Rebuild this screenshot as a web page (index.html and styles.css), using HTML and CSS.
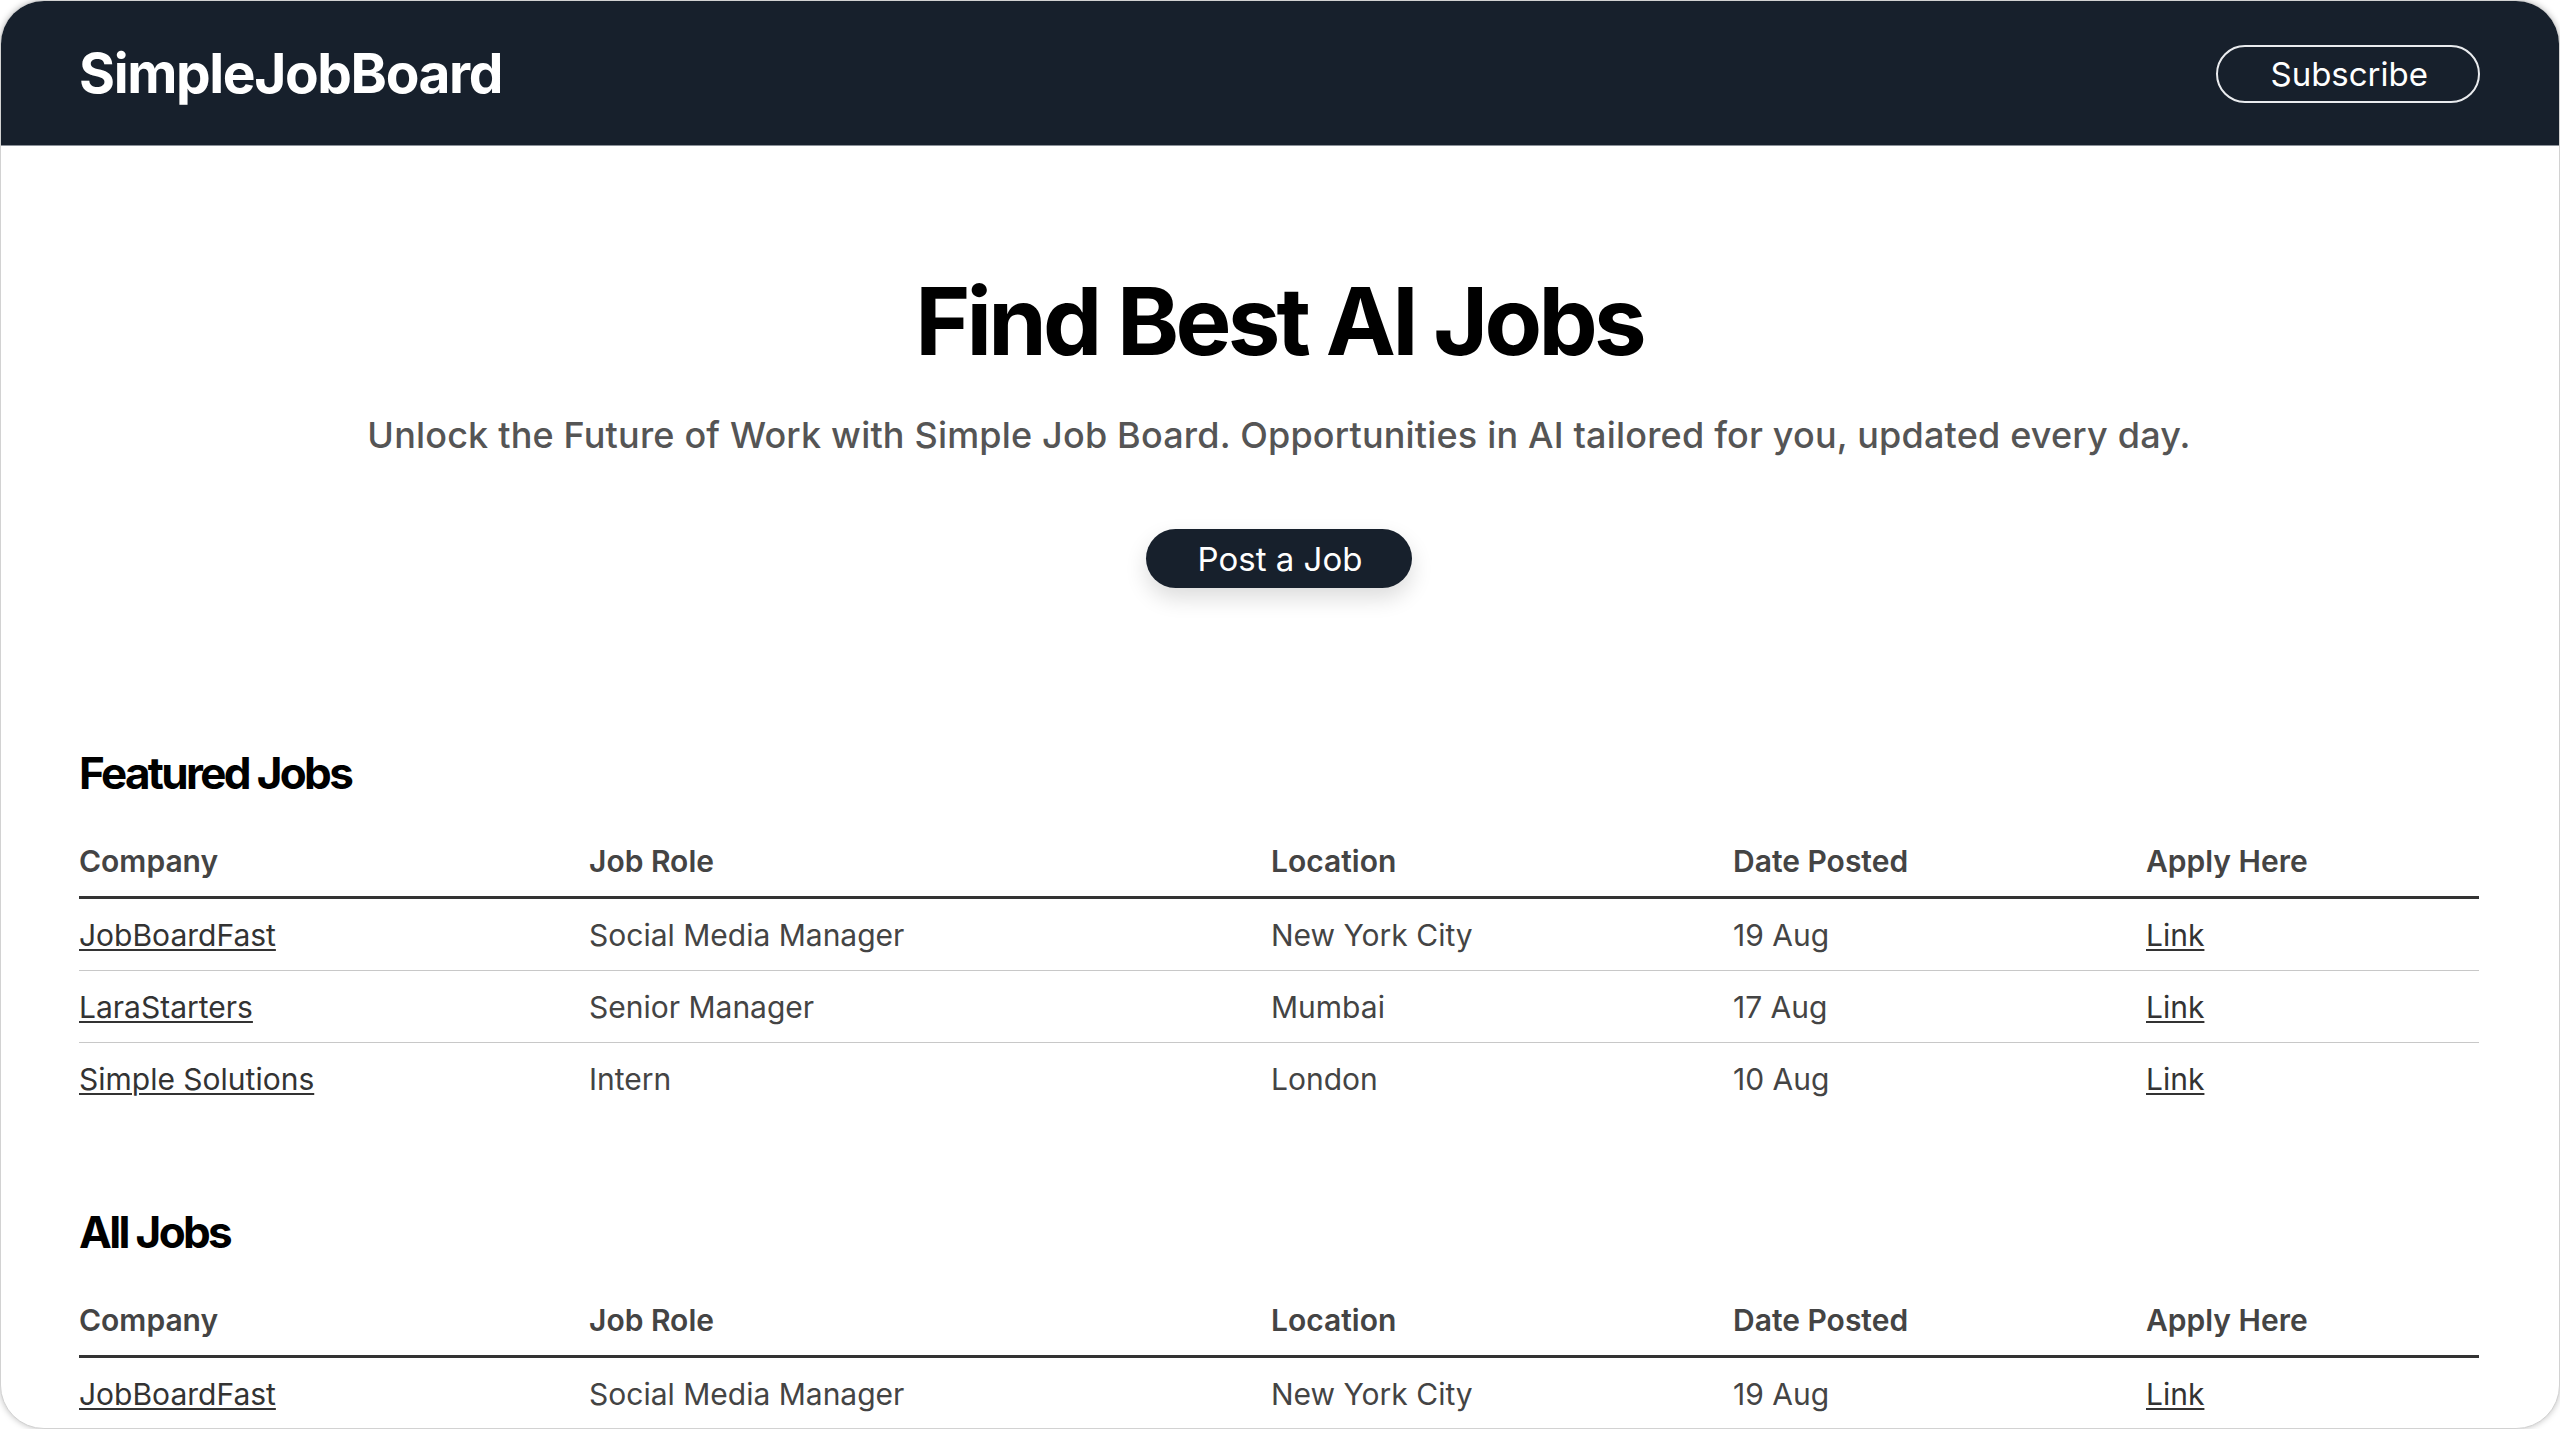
FILE: index.html
```html
<!DOCTYPE html>
<html lang="en">
<head>
<meta charset="utf-8">
<title>SimpleJobBoard</title>
<link rel="stylesheet" href="styles.css">
</head>
<body>
<div class="frame">
  <header class="topbar">
    <div class="logo">SimpleJobBoard</div>
    <a class="btn-outline" href="#">Subscribe</a>
  </header>
  <main class="content">
    <section class="hero">
      <h1 class="hero-title">Find Best AI Jobs</h1>
      <p class="hero-sub">Unlock the Future of Work with Simple Job Board. Opportunities in AI tailored for you, updated every day.</p>
      <a class="btn-solid" href="#">Post a Job</a>
    </section>

    <section class="jobs featured">
      <h2 class="section-title">Featured Jobs</h2>
      <table class="job-table">
        <colgroup>
          <col class="c-company"><col class="c-role"><col class="c-loc"><col class="c-date"><col class="c-apply">
        </colgroup>
        <thead>
          <tr><th>Company</th><th>Job Role</th><th>Location</th><th>Date Posted</th><th>Apply Here</th></tr>
        </thead>
        <tbody>
          <tr><td><a href="#">JobBoardFast</a></td><td>Social Media Manager</td><td>New York City</td><td>19 Aug</td><td><a href="#">Link</a></td></tr>
          <tr><td><a href="#">LaraStarters</a></td><td>Senior Manager</td><td>Mumbai</td><td>17 Aug</td><td><a href="#">Link</a></td></tr>
          <tr><td><a href="#">Simple Solutions</a></td><td>Intern</td><td>London</td><td>10 Aug</td><td><a href="#">Link</a></td></tr>
        </tbody>
      </table>
    </section>

    <section class="jobs all">
      <h2 class="section-title">All Jobs</h2>
      <table class="job-table">
        <colgroup>
          <col class="c-company"><col class="c-role"><col class="c-loc"><col class="c-date"><col class="c-apply">
        </colgroup>
        <thead>
          <tr><th>Company</th><th>Job Role</th><th>Location</th><th>Date Posted</th><th>Apply Here</th></tr>
        </thead>
        <tbody>
          <tr><td><a href="#">JobBoardFast</a></td><td>Social Media Manager</td><td>New York City</td><td>19 Aug</td><td><a href="#">Link</a></td></tr>
        </tbody>
      </table>
    </section>
  </main>
</div>
</body>
</html>
```

FILE: styles.css
```css
html, body {
  margin: 0;
  padding: 0;
  background: #ffffff;
  height: 100%;
  overflow: hidden;
}

body {
  font-family: "Inter", "Liberation Sans", Arial, sans-serif;
}

.frame {
  height: 1429px;
  box-sizing: border-box;
  border-radius: 44px;
  overflow: hidden;
  background: #ffffff;
  border: 1px solid #d2d2d2;
  box-shadow: 0 0 6px rgba(0, 0, 0, 0.25);
}

.topbar {
  height: 145px;
  box-sizing: border-box;
  background: #17202c;
  border-bottom: 1px solid #8b9199;
  display: flex;
  align-items: center;
  justify-content: space-between;
  padding: 0 79px 0 78px;
}

.logo {
  color: #ffffff;
  font-weight: 700;
  font-size: 55px;
  letter-spacing: -0.025em;
  line-height: 1;
}

.btn-outline {
  display: inline-flex;
  align-items: center;
  justify-content: center;
  height: 58px;
  box-sizing: border-box;
  padding: 0 50px 0 52px;
  border: 2px solid #e9ebee;
  border-radius: 999px;
  color: #ffffff;
  font-size: 33px;
  text-decoration: none;
  margin-top: 1px;
}

.content {
  padding: 0 80px 0 78px;
}

.hero {
  display: flex;
  flex-direction: column;
  align-items: center;
  padding-top: 128px;
}

.hero-title {
  margin: 0;
  font-size: 94px;
  line-height: 1;
  font-weight: 700;
  letter-spacing: -0.04em;
  color: #000000;
}

.hero-sub {
  margin: 49px 0 0;
  font-size: 36px;
  line-height: 1;
  font-weight: 500;
  letter-spacing: 0.005em;
  color: #555555;
}

.btn-solid {
  margin-top: 76px;
  display: inline-flex;
  align-items: center;
  justify-content: center;
  height: 59px;
  box-sizing: border-box;
  padding: 0 50px 0 52px;
  border-radius: 999px;
  background: #17202c;
  color: #ffffff;
  font-size: 33px;
  text-decoration: none;
  box-shadow: 0 10px 22px rgba(0, 0, 0, 0.14);
}

.jobs.featured {
  margin-top: 163px;
}

.jobs.all {
  margin-top: 96px;
}

.section-title {
  margin: 0 0 30px;
  font-size: 44px;
  line-height: 1;
  font-weight: 700;
  letter-spacing: -0.06em;
  color: #000000;
}

.job-table {
  width: 100%;
  table-layout: fixed;
  border-collapse: collapse;
  color: #444444;
}

.c-company { width: 510px; }
.c-role { width: 682px; }
.c-loc { width: 462px; }
.c-date { width: 413px; }
.c-apply { width: auto; }

.job-table th {
  text-align: left;
  font-size: 30px;
  font-weight: 600;
  line-height: 44px;
  padding: 14px 0 13px;
  border-bottom: 3px solid #333333;
}

.job-table td {
  font-size: 30px;
  font-weight: 400;
  line-height: 44px;
  padding: 14px 0 13px;
  border-bottom: 1px solid #c8c8c8;
}

.job-table tbody tr:last-child td {
  border-bottom: none;
}

.jobs.all .job-table tbody tr:last-child td {
  border-bottom: 1px solid #c8c8c8;
}

.job-table a {
  color: #333333;
  text-decoration: underline;
  text-decoration-thickness: 2px;
  text-underline-offset: 3px;
}
```
